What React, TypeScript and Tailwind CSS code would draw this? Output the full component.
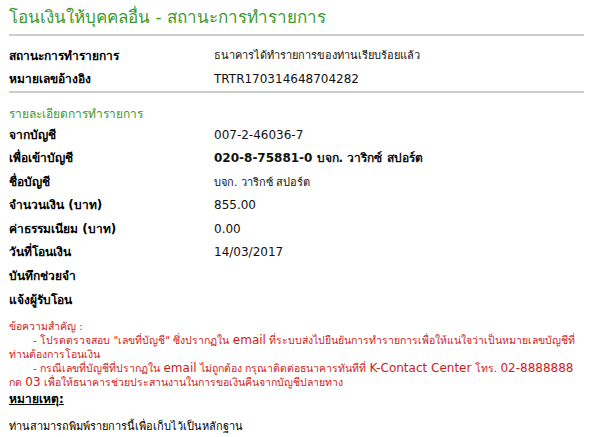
const rowsTop = [
  { label: "สถานะการทำรายการ", value: "ธนาคารได้ทำรายการของท่านเรียบร้อยแล้ว", thaiValue: true },
  { label: "หมายเลขอ้างอิง", value: "TRTR170314648704282" },
];

const Row = ({ label, children, h = "h-[23.5px]" }: { label: string; children?: React.ReactNode; h?: string }) => (
  <div className={`flex items-center ${h}`}>
    <div className="w-[205px] shrink-0 text-[12px] font-bold text-black">{label}</div>
    <div className="flex-1 text-[12px] text-[#111]">{children}</div>
  </div>
);

export default function App() {
  return (
    <div className="h-[437px] w-[590px] overflow-hidden bg-white px-[9px] font-['Tahoma','DejaVu_Sans',sans-serif]">
      <div className="flex h-[34px] items-center pt-[2px] text-[17px] text-[#3c9a2c]">
        โอนเงินให้บุคคลอื่น - สถานะการทำรายการ
      </div>
      <div className="mr-[-3px] h-[2px] bg-[#cccccc]" />
      <div className="mt-[8px]">
        {rowsTop.map((r) => (
          <Row key={r.label} label={r.label} h="h-[23px]">
            <span className={r.thaiValue ? "text-[11px]" : "text-[12px]"}>{r.value}</span>
          </Row>
        ))}
      </div>
      <div className="mr-[-3px] mt-[1px] h-[2px] bg-[#cccccc]" />
      <div className="mt-[13px] flex h-[16px] items-center text-[12px] text-[#3c9a2c]">รายละเอียดการทำรายการ</div>
      <div className="mt-[1px]">
        <Row label="จากบัญชี">007-2-46036-7</Row>
        <Row label="เพื่อเข้าบัญชี">
          <span className="font-bold">020-8-75881-0 บจก. วาริกซ์ สปอร์ต</span>
        </Row>
        <Row label="ชื่อบัญชี">
          <span className="text-[11px]">บจก. วาริกซ์ สปอร์ต</span>
        </Row>
        <Row label="จำนวนเงิน (บาท)">855.00</Row>
        <Row label="ค่าธรรมเนียม (บาท)">0.00</Row>
        <Row label="วันที่โอนเงิน">14/03/2017</Row>
        <Row label="บันทึกช่วยจำ" h="h-[23px]" />
        <Row label="แจ้งผู้รับโอน" h="h-[26px]" />
      </div>
      <div className="mt-[6px] whitespace-nowrap text-[10.5px] leading-[14px] text-[#d01a1a]">
        <div>ข้อความสำคัญ :</div>
        <div className="pl-[24px]">
          - โปรดตรวจสอบ "เลขที่บัญชี" ซึ่งปรากฏใน <span className="text-[12px]">email</span> ที่ระบบส่งไปยืนยันการทำรายการเพื่อให้แน่ใจว่าเป็นหมายเลขบัญชีที่
        </div>
        <div>ท่านต้องการโอนเงิน</div>
        <div className="pl-[24px]">
          - กรณีเลขที่บัญชีที่ปรากฏใน <span className="text-[12px]">email</span> ไม่ถูกต้อง กรุณาติดต่อธนาคารทันทีที่{" "}
          <span className="text-[12px]">K-Contact Center</span> โทร. <span className="text-[12px]">02-8888888</span>
        </div>
        <div>
          กด <span className="text-[12px]">03</span> เพื่อให้ธนาคารช่วยประสานงานในการขอเงินคืนจากบัญชีปลายทาง
        </div>
      </div>
      <div className="mt-[1px] text-[12px] font-bold text-black underline">หมายเหตุ:</div>
      <div className="mt-[11px] text-[11px] text-black">ท่านสามารถพิมพ์รายการนี้เพื่อเก็บไว้เป็นหลักฐาน</div>
    </div>
  );
}
